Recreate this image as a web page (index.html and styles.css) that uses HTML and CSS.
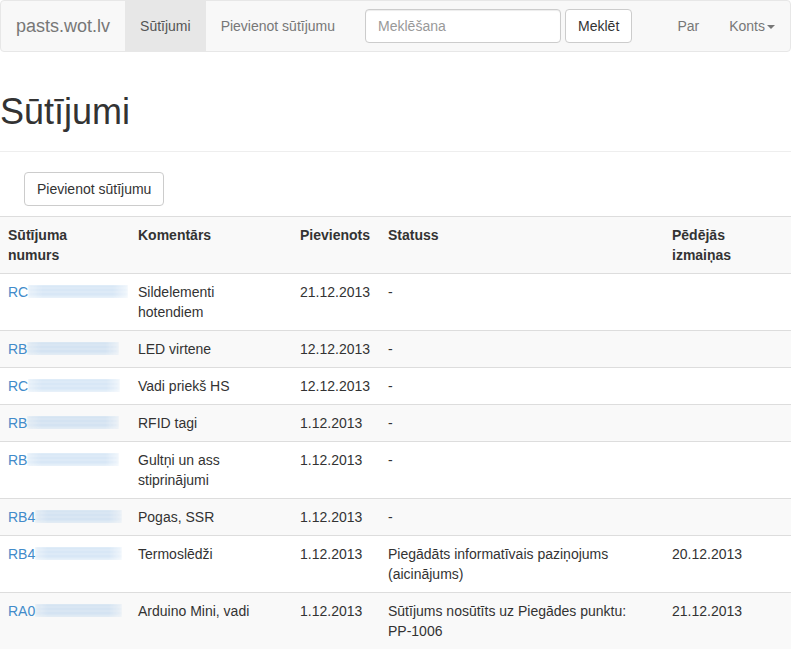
FILE: index.html
```html
<!DOCTYPE html>
<html lang="lv">
<head>
<meta charset="utf-8">
<title>pasts.wot.lv</title>
<link rel="stylesheet" href="styles.css">
</head>
<body>
<nav class="navbar">
  <a class="brand" href="#">pasts.wot.lv</a>
  <ul class="nav">
    <li class="active"><a href="#">Sūtījumi</a></li>
    <li><a href="#">Pievienot sūtījumu</a></li>
  </ul>
  <form class="navbar-form">
    <input class="search" type="text" placeholder="Meklēšana">
    <button class="btn" type="button">Meklēt</button>
  </form>
  <ul class="nav nav-right">
    <li><a href="#">Par</a></li>
    <li><a href="#">Konts<span class="caret"></span></a></li>
  </ul>
</nav>

<div class="page-header">
  <h1>Sūtījumi</h1>
</div>

<div class="actions">
  <button class="btn" type="button">Pievienot sūtījumu</button>
</div>

<table class="table">
  <colgroup>
    <col class="c1"><col class="c2"><col class="c3"><col class="c4"><col class="c5">
  </colgroup>
  <tbody>
    <tr class="head">
      <th>Sūtījuma numurs</th>
      <th>Komentārs</th>
      <th>Pievienots</th>
      <th>Statuss</th>
      <th>Pēdējās izmaiņas</th>
    </tr>
    <tr>
      <td><a href="#">RC<span class="blur wide" aria-hidden="true"></span></a></td>
      <td>Sildelementi hotendiem</td>
      <td>21.12.2013</td>
      <td>-</td>
      <td></td>
    </tr>
    <tr>
      <td><a href="#">RB<span class="blur" aria-hidden="true"></span></a></td>
      <td>LED virtene</td>
      <td>12.12.2013</td>
      <td>-</td>
      <td></td>
    </tr>
    <tr>
      <td><a href="#">RC<span class="blur" aria-hidden="true"></span></a></td>
      <td>Vadi priekš HS</td>
      <td>12.12.2013</td>
      <td>-</td>
      <td></td>
    </tr>
    <tr>
      <td><a href="#">RB<span class="blur" aria-hidden="true"></span></a></td>
      <td>RFID tagi</td>
      <td>1.12.2013</td>
      <td>-</td>
      <td></td>
    </tr>
    <tr>
      <td><a href="#">RB<span class="blur" aria-hidden="true"></span></a></td>
      <td>Gultņi un ass stiprinājumi</td>
      <td>1.12.2013</td>
      <td>-</td>
      <td></td>
    </tr>
    <tr>
      <td><a href="#">RB4<span class="blur short" aria-hidden="true"></span></a></td>
      <td>Pogas, SSR</td>
      <td>1.12.2013</td>
      <td>-</td>
      <td></td>
    </tr>
    <tr>
      <td><a href="#">RB4<span class="blur short" aria-hidden="true"></span></a></td>
      <td>Termoslēdži</td>
      <td>1.12.2013</td>
      <td>Piegādāts informatīvais paziņojums (aicinājums)</td>
      <td>20.12.2013</td>
    </tr>
    <tr>
      <td><a href="#">RA0<span class="blur short" aria-hidden="true"></span></a></td>
      <td>Arduino Mini, vadi</td>
      <td>1.12.2013</td>
      <td>Sūtījums nosūtīts uz Piegādes punktu: <span class="nowrap">PP-1006</span></td>
      <td>21.12.2013</td>
    </tr>
  </tbody>
</table>
</body>
</html>
```

FILE: styles.css
```css
* { box-sizing: border-box; }

html, body {
  margin: 0;
  padding: 0;
  background: #fff;
}

body {
  font-family: "Liberation Sans", Arial, sans-serif;
  font-size: 14px;
  line-height: 20px;
  color: #333;
}

a { color: #428bca; text-decoration: none; }

.nowrap { white-space: nowrap; }

.navbar {
  display: flex;
  align-items: flex-start;
  height: 52px;
  background: #f8f8f8;
  border: 1px solid #e7e7e7;
  border-radius: 4px;
}

.brand {
  display: block;
  padding: 15px;
  font-size: 18px;
  line-height: 20px;
  height: 50px;
  color: #777;
}

.nav {
  display: flex;
  list-style: none;
  margin: 0;
  padding: 0;
}

.nav li a {
  display: block;
  padding: 15px;
  line-height: 20px;
  color: #777;
}

.nav li.active a {
  background: #e7e7e7;
  color: #555;
}

.nav-right { margin-left: auto; }

.caret {
  display: inline-block;
  width: 0;
  height: 0;
  margin-left: 2px;
  vertical-align: middle;
  border-top: 4px solid #777;
  border-left: 4px solid transparent;
  border-right: 4px solid transparent;
}

.navbar-form {
  display: flex;
  gap: 4px;
  margin: 8px 0 0;
  padding: 0 15px;
}

.search {
  width: 196px;
  height: 34px;
  padding: 6px 12px;
  font-family: inherit;
  font-size: 14px;
  color: #555;
  background: #fff;
  border: 1px solid #ccc;
  border-radius: 4px;
  box-shadow: inset 0 1px 1px rgba(0,0,0,0.075);
}

.search::placeholder { color: #999; }

.btn {
  height: 34px;
  padding: 6px 12px;
  font-family: inherit;
  font-size: 14px;
  line-height: 20px;
  color: #333;
  background: #fff;
  border: 1px solid #ccc;
  border-radius: 4px;
}

.page-header {
  margin: 40px 0 20px;
  padding-bottom: 9px;
  border-bottom: 1px solid #eee;
}

h1 {
  margin: 0 0 10px;
  font-size: 36px;
  font-weight: 500;
  line-height: 1.1;
  color: #333;
}

.actions {
  padding-left: 24px;
  margin-bottom: 10px;
  height: 34px;
}

.table {
  width: 100%;
  border-collapse: collapse;
  border-spacing: 0;
  table-layout: fixed;
}

.c1 { width: 130px; }
.c2 { width: 162px; }
.c3 { width: 88px; }
.c4 { width: 284px; }

.table th,
.table td {
  padding: 8px;
  line-height: 20px;
  text-align: left;
  vertical-align: top;
  border-top: 1px solid #ddd;
}

.table td:nth-child(2) { padding-right: 12px; }

.table th { font-weight: bold; }

.table tr:nth-child(odd) > th,
.table tr:nth-child(odd) > td {
  background: #f9f9f9;
}

.table td a { white-space: nowrap; }

.blur {
  display: inline-block;
  width: 92px;
  height: 13px;
  vertical-align: -1px;
  background:
    repeating-linear-gradient(to bottom,
      rgba(140, 185, 228, 0.45) 0 2px,
      rgba(185, 215, 240, 0.3) 2px 4px);
  filter: blur(1.3px);
  -webkit-mask-image: linear-gradient(to right, rgba(0,0,0,0.6), #000 15%, #000 85%, rgba(0,0,0,0.4));
  mask-image: linear-gradient(to right, rgba(0,0,0,0.6), #000 15%, #000 85%, rgba(0,0,0,0.4));
}

.blur.wide { width: 100px; }
.blur.short { width: 87px; }
```
